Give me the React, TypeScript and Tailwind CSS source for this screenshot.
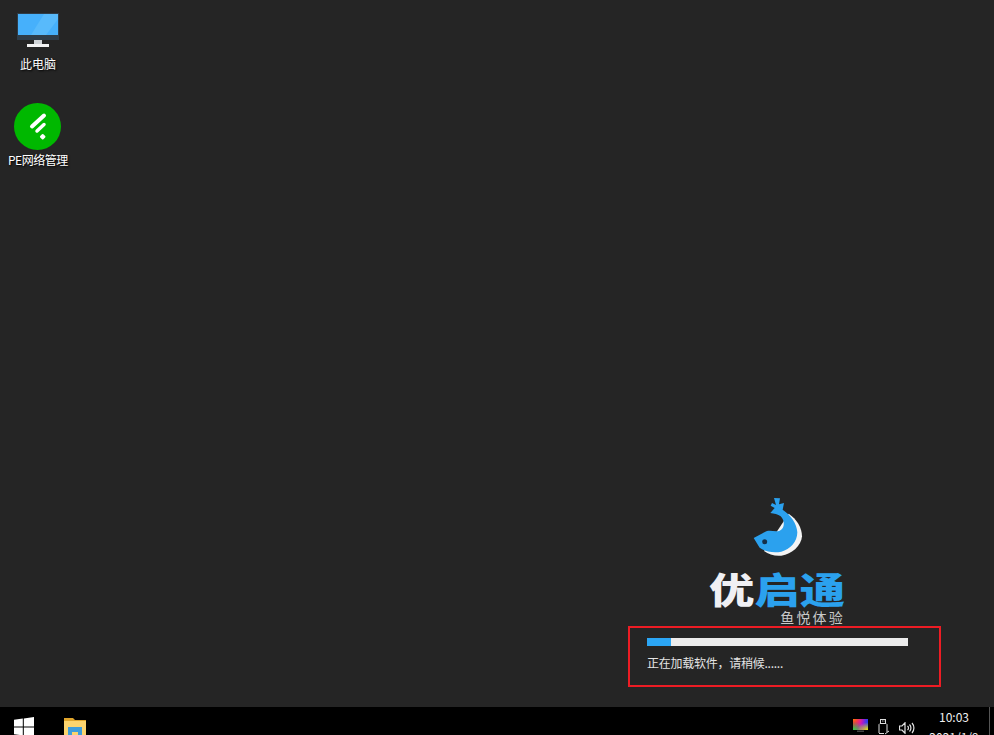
const FONT = "font-['Noto_Sans_CJK_SC','Noto_Sans',sans-serif]";

function DesktopIcon({ label, className, labelClass, children }: { label: string; className: string; labelClass?: string; children: React.ReactNode }) {
  return (
    <div className={`absolute flex flex-col items-center ${className}`}>
      {children}
      <span className={`text-[12px] leading-[16px] text-white [text-shadow:1px_1px_2px_#000] whitespace-nowrap ${labelClass ?? ""}`}>{label}</span>
    </div>
  );
}

function Monitor() {
  return (
    <svg width="44" height="36" viewBox="0 0 44 36" className="mb-[7px]">
      <rect x="1" y="0" width="42" height="27" fill="#2e3c48" />
      <rect x="2" y="1" width="40" height="21" fill="#46b0fb" />
      <path d="M28 1h14v5L30 22H15z" fill="#58bafb" />
      <rect x="18" y="27" width="8" height="5" fill="#cfd3d6" />
      <rect x="11" y="31" width="22" height="3" fill="#f2f2f2" />
    </svg>
  );
}

function Feedly() {
  return (
    <svg width="47" height="47" viewBox="0 0 47 47" className="mb-[2px]">
      <circle cx="23.500" cy="23.500" r="23.500" fill="#00b800" />
      <path d="M18 23.500L30 12.500" stroke="#fff" strokeWidth="4" strokeLinecap="round" />
      <path d="M23 28L30 21.500" stroke="#fff" strokeWidth="3.500" strokeLinecap="round" />
      <rect x="26.500" y="31.500" width="4.500" height="4.500" rx="1" fill="#fff" transform="rotate(45 28.700 33.700)" />
    </svg>
  );
}

function Fish() {
  return (
    <svg width="60" height="68" viewBox="0 0 180 204">
      <path d="M122 62C146 78 162 104 162 130C160 158 132 184 100 188C80 190 62 184 48 174Z" fill="#f4f4f4" />
      <path d="M17 135L55 115C68 110 82 118 95 113C110 106 112 84 98 70C90 63 78 62 67 60L80 45L68 38L72 30L84 36L78 15L96 16L93 34L108 30L104 50C128 66 147 92 148 118C148 146 126 170 100 176C76 180 50 176 35 164Z" fill="#2ba1ee" />
      <circle cx="50" cy="146" r="7.500" fill="#14304a" />
    </svg>
  );
}

function WindowsLogo() {
  return (
    <svg width="20" height="20" viewBox="0 0 20 20">
      <path d="M0 2.800L8.800 1.600V9.500H0zM9.800 1.450L20 0V9.500H9.800zM0 10.500H8.800V18.400L0 17.200zM9.800 10.500H20V20L9.800 18.550z" fill="#fff" />
    </svg>
  );
}

function Explorer() {
  return (
    <svg width="22" height="22" viewBox="0 0 22 22">
      <path d="M0 1h9l2 2h11v19H0z" fill="#e0a52c" />
      <rect x="0" y="4" width="22" height="18" fill="#fcd46e" />
      <rect x="4" y="10" width="14" height="12" fill="#3f9ddb" />
      <rect x="8" y="15" width="6" height="7" fill="#fcd46e" />
    </svg>
  );
}

function Tray() {
  return (
    <div className="flex items-start mt-[12px]">
      <svg width="15" height="14" viewBox="0 0 15 14">
        <defs>
          <radialGradient id="c1" cx="0" cy="0" r="0.800">
            <stop offset="0" stopColor="#ff8000" />
            <stop offset="1" stopColor="#ff2040" stopOpacity="0" />
          </radialGradient>
          <radialGradient id="c2" cx="0" cy="1" r="0.800">
            <stop offset="0" stopColor="#20e040" />
            <stop offset="1" stopColor="#20e040" stopOpacity="0" />
          </radialGradient>
          <radialGradient id="c3" cx="1" cy="1" r="0.700">
            <stop offset="0" stopColor="#f0f000" />
            <stop offset="1" stopColor="#f0f000" stopOpacity="0" />
          </radialGradient>
          <linearGradient id="c0" x1="0" y1="0" x2="1" y2="0">
            <stop offset="0" stopColor="#f01050" />
            <stop offset="0.500" stopColor="#d010d0" />
            <stop offset="1" stopColor="#2040f0" />
          </linearGradient>
        </defs>
        <rect width="15" height="11" fill="url(#c0)" />
        <rect width="15" height="11" fill="url(#c1)" />
        <rect width="15" height="11" fill="url(#c2)" />
        <rect width="15" height="11" fill="url(#c3)" />
        <rect x="4" y="11.500" width="7" height="1.500" fill="#444" />
      </svg>
      <svg width="12" height="16" viewBox="0 0 12 16" fill="none" stroke="#ddd" strokeWidth="1" className="ml-[10px]">
        <path d="M1 14V5.500l1-1h6l1 1V13" />
        <path d="M1 14.500h5" />
        <rect x="2.500" y="0.500" width="5" height="4" />
        <path d="M4 2h.8M5.600 2h.8" />
        <path d="M7 15l4-3" />
      </svg>
      <svg width="16" height="12" viewBox="0 0 16 12" fill="none" stroke="#e4e4e4" strokeWidth="1.200" className="ml-[9px] mt-[3px]">
        <path d="M.5 4h2.500L6 .800v10.400L3 8H.5z" />
        <path d="M8.500 4a2.500 2.500 0 0 1 0 4M10.500 2.500a5 5 0 0 1 0 7M13 1a7.500 7.500 0 0 1 0 10" />
      </svg>
    </div>
  );
}

export default function App() {
  return (
    <div className={`relative w-[994px] h-[735px] overflow-hidden bg-[#252525] flex flex-col ${FONT}`}>
      <DesktopIcon label="此电脑" className="left-[16px] top-[13px]">
        <Monitor />
      </DesktopIcon>
      <DesktopIcon label="PE网络管理" className="left-[8px] top-[103px]" labelClass="tracking-[-0.500px]">
        <Feedly />
      </DesktopIcon>

      <div className="flex-1 flex flex-col items-end justify-end pr-[53px] pb-[20px]">
        <div className="w-[313px] flex flex-col items-center relative">
          <div className="mr-[14px] mb-[10px]">
            <Fish />
          </div>
          <div className="text-[36px] leading-[34px] font-black scale-x-[1.26] whitespace-nowrap mb-[5px] mr-[14px]">
            <span className="text-[#f0f0f4]">优</span>
            <span className="text-[#2ba1ee]">启通</span>
          </div>
          <div className="text-[14px] leading-[15px] text-[#c9c9c9] tracking-[2.200px] self-end mr-[96px] mb-[1px]">鱼悦体验</div>
          <div className="w-full h-[61px] border-2 border-[#ed1c24] px-[17px] pt-[10px]">
            <div className="w-[261px] h-[8px] bg-[#ececec]">
              <div className="w-[24px] h-full bg-[#2ba6f5]" />
            </div>
            <p className="mt-[9px] text-[12px] leading-[16px] tracking-[-0.250px] text-[#e4e4e4] whitespace-nowrap">正在加载软件，请稍候......</p>
          </div>
        </div>
      </div>

      <footer className="h-[28px] shrink-0 bg-black flex items-start overflow-hidden">
        <div className="mt-[10px] ml-[14px]"><WindowsLogo /></div>
        <div className="mt-[10px] ml-[30px]"><Explorer /></div>
        <div className="ml-auto flex items-start">
          <Tray />
          <div className="w-[70px] ml-[4px] text-center text-[12px] leading-[20px] text-[#f0f0f0]">
            <div>10:03</div>
            <div>2021/1/9</div>
          </div>
          <div className="w-[1px] h-[28px] bg-[#555] mr-[4px]" />
        </div>
      </footer>
    </div>
  );
}
